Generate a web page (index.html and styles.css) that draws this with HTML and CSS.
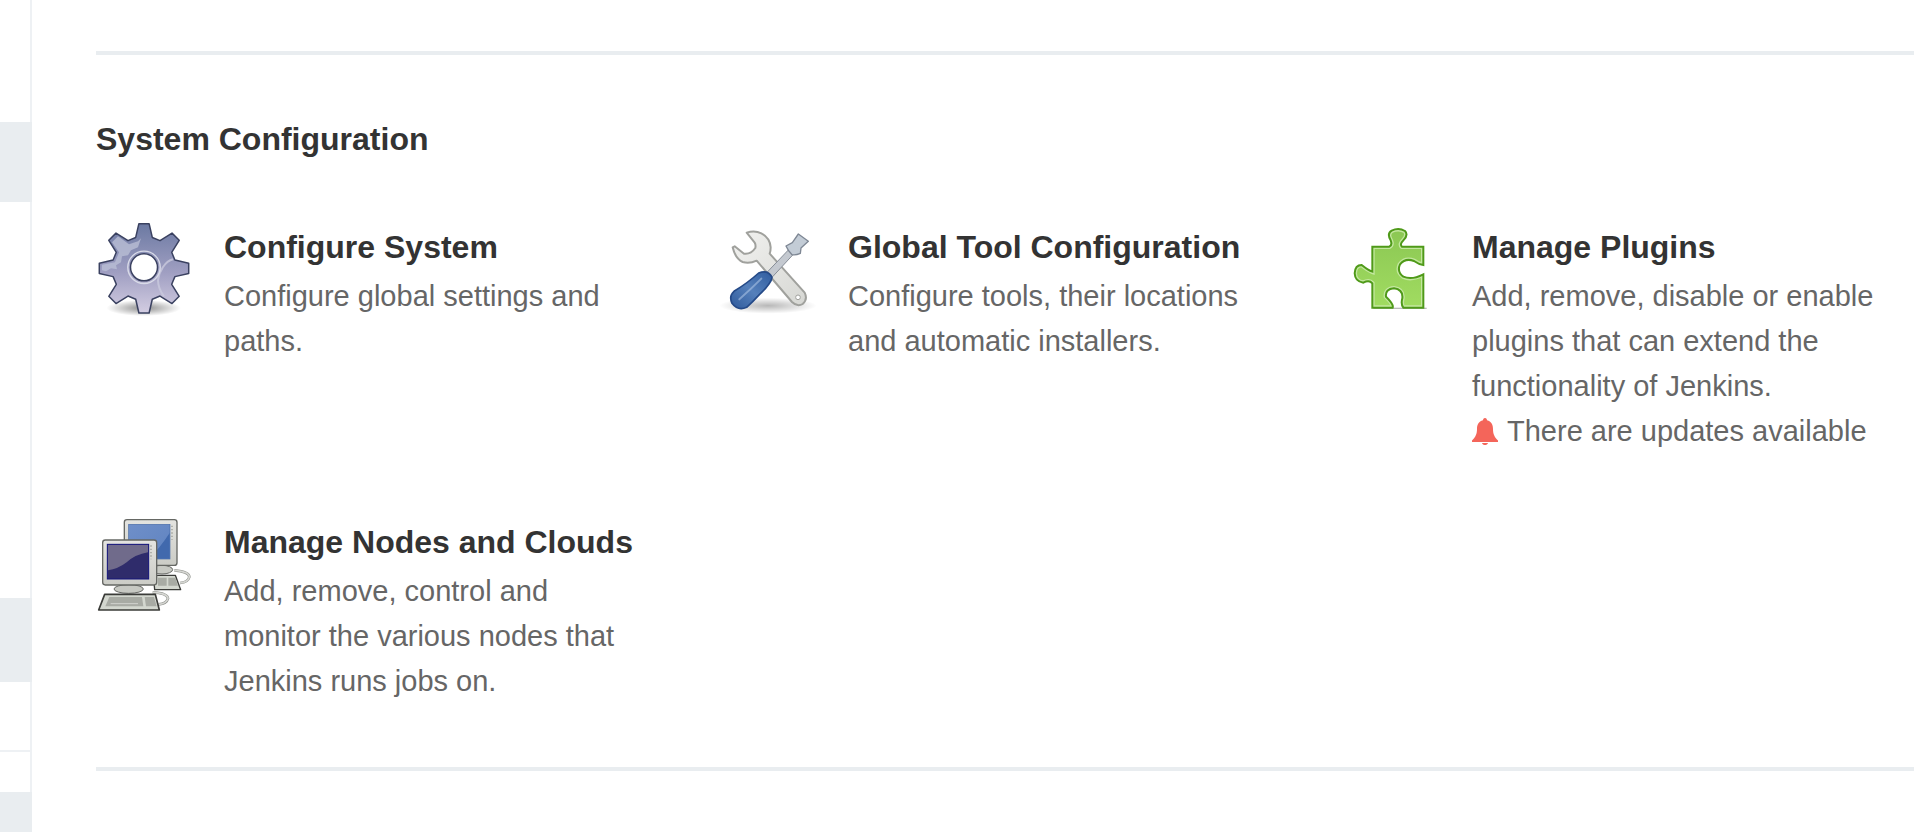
FILE: index.html
```html
<!DOCTYPE html>
<html>
<head>
    <title>Manage Jenkins</title>
    <meta name="viewport" content="width=device-width, initial-scale=1.0">
    <link rel="stylesheet" href="styles.css">
</head>
<body>
    <div id="sidebar">
        <div class="side-item"></div>
        <div class="side-item active"></div>
        <div class="side-item"></div>
        <div class="side-item active"></div>
        <div class="side-item ruled"></div>
        <div class="side-item"></div>
        <div class="side-item active"></div>
    </div>
    <div id="main">
        <hr class="rule">
        <h2 class="section-title">System Configuration</h2>
        <div class="manage-grid">
            <div class="manage-item">
                <svg class="manage-icon" viewBox="0 0 288 288">
                    <defs>
                        <linearGradient id="gear-fill" x1="0" y1="0" x2="0" y2="1">
                            <stop offset="0" stop-color="#6b79a2"/>
                            <stop offset="0.55" stop-color="#a09fc2"/>
                            <stop offset="1" stop-color="#d3cde2"/>
                        </linearGradient>
                        <radialGradient id="gear-shadow">
                            <stop offset="0" stop-color="#000" stop-opacity="0.45"/>
                            <stop offset="1" stop-color="#000" stop-opacity="0"/>
                        </radialGradient>
                    </defs>
                    <ellipse cx="143" cy="258" rx="112" ry="24" fill="url(#gear-shadow)"/>
                    <g transform="translate(144 139) scale(3)">
                        <path fill="url(#gear-fill)" stroke="#3a4160" stroke-width="1.5" stroke-linejoin="round" d="M-8.3 -30.9L-5.1 -44.7L5.100 -44.7L8.3 -30.9L16 -27.7L28 -35.2L35.2 -28L27.7 -16L30.9 -8.3L44.7 -5.1L44.7 5.100L30.9 8.3L27.7 16L35.2 28L28 35.2L16 27.7L8.3 30.9L5.100 44.7L-5.1 44.7L-8.3 30.9L-16 27.7L-28 35.2L-35.2 28L-27.7 16L-30.9 8.3L-44.7 5.100L-44.7 -5.1L-30.9 -8.3L-27.7 -16L-35.2 -28L-28 -35.2L-16 -27.7Z"/>
                        <path fill="#b9bed4" opacity="0.8" d="M-42 -3.500L-29 -6L-25 -16L-32 -26L-26 -32L-15 -24L-6 -27L-3 -30L-6 -21L-13 -18L-16 -13L-22 -12L-23 -6L-28 -3L-27 1L-33 0L-38 3L-42 2Z"/>
                        <path fill="none" stroke="#c9c9dd" stroke-width="2" opacity="0.8" d="M29 -9C21 -7 15 3 14 12C14 18 17 24 20 28"/>
                        <circle cy="-1" r="16.200" fill="none" stroke="#d9dbe8" stroke-width="1.400"/>
                        <circle cy="-1" r="13.500" fill="#fff" stroke="#3a4160" stroke-width="1.500"/>
                    </g>
                </svg>
                <div class="manage-text">
                    <div class="manage-title">Configure System</div>
                    <div class="manage-desc">Configure global settings and paths.</div>
                </div>
            </div>
            <div class="manage-item">
                <svg class="manage-icon" viewBox="0 0 288 288">
                    <defs>
                        <linearGradient id="wrench-fill" x1="0" y1="0" x2="1" y2="1">
                            <stop offset="0" stop-color="#f2f2f0"/>
                            <stop offset="1" stop-color="#d6d7d3"/>
                        </linearGradient>
                        <linearGradient id="handle-fill" x1="1" y1="0" x2="0" y2="1">
                            <stop offset="0" stop-color="#2f5c9f"/>
                            <stop offset="0.5" stop-color="#5580bb"/>
                            <stop offset="1" stop-color="#2f5a9b"/>
                        </linearGradient>
                        <radialGradient id="tool-shadow">
                            <stop offset="0" stop-color="#000" stop-opacity="0.28"/>
                            <stop offset="1" stop-color="#000" stop-opacity="0"/>
                        </radialGradient>
                    </defs>
                    <ellipse cx="144" cy="251" rx="146" ry="24" fill="url(#tool-shadow)"/>
                    <path fill="url(#wrench-fill)" stroke="#a0a19d" stroke-width="6" stroke-linejoin="round" d="M80 32Q104 24 124 34Q150 48 152 76Q152 88 149 95L254 212Q264 232 248 246Q232 256 216 240L110 116Q88 126 68 120Q46 110 38 76L44 73L72 95Q92 98 106 78Q108 68 104 62Z"/>
                    <circle cx="234" cy="226" r="7" fill="#fff" stroke="#a0a19d" stroke-width="3"/>
                    <path fill="#c4c9d0" stroke="#878e98" stroke-width="3" stroke-linejoin="round" d="M205 84L220 97L158 164L142 150Z"/>
                    <path fill="#c3ccd6" stroke="#7e8794" stroke-width="4" stroke-linejoin="round" d="M235 36L265 58L243 78L241 94Q228 100 216 98Q204 86 198 72L217 62Z"/>
                    <path fill="url(#handle-fill)" stroke="#254a88" stroke-width="5" stroke-linejoin="round" d="M116 153Q144 142 156 166Q154 184 118 218Q98 240 80 256Q54 268 36 244Q26 222 42 208Q84 182 116 153Z"/>
                    <path fill="none" stroke="#a9c1e2" stroke-width="6" stroke-linecap="round" opacity="0.6" d="M58 232Q92 202 124 170"/>
                </svg>
                <div class="manage-text">
                    <div class="manage-title">Global Tool Configuration</div>
                    <div class="manage-desc">Configure tools, their locations and automatic installers.</div>
                </div>
            </div>
            <div class="manage-item">
                <svg class="manage-icon" viewBox="12 21 288 288">
                    <defs>
                        <linearGradient id="puzzle-fill" x1="0" y1="0" x2="0" y2="1">
                            <stop offset="0" stop-color="#8bc753"/>
                            <stop offset="1" stop-color="#a1dc61"/>
                        </linearGradient>
                        <clipPath id="puzzle-clip">
                            <path d="M97 95H148Q158 90 152 76Q140 56 155 47Q176 37 195 48Q206 60 190 76Q178 88 186 95H250V150Q236 148 222 138Q196 128 180 148Q170 170 190 185Q215 196 250 178V278H190Q182 268 187 250Q190 224 162 220Q135 222 138 245Q162 268 158 278H97V205Q88 194 70 203Q45 200 44 175Q45 150 65 150Q85 166 97 170Z"/>
                        </clipPath>
                    </defs>
                    <rect x="100" y="278" width="160" height="4" fill="#bbb"/>
                    <path fill="url(#puzzle-fill)" stroke="#c3e79f" stroke-width="14" clip-path="url(#puzzle-clip)" d="M97 95H148Q158 90 152 76Q140 56 155 47Q176 37 195 48Q206 60 190 76Q178 88 186 95H250V150Q236 148 222 138Q196 128 180 148Q170 170 190 185Q215 196 250 178V278H190Q182 268 187 250Q190 224 162 220Q135 222 138 245Q162 268 158 278H97V205Q88 194 70 203Q45 200 44 175Q45 150 65 150Q85 166 97 170Z"/>
                    <path fill="none" stroke="#4f9a19" stroke-width="6" d="M97 95H148Q158 90 152 76Q140 56 155 47Q176 37 195 48Q206 60 190 76Q178 88 186 95H250V150Q236 148 222 138Q196 128 180 148Q170 170 190 185Q215 196 250 178V278H190Q182 268 187 250Q190 224 162 220Q135 222 138 245Q162 268 158 278H97V205Q88 194 70 203Q45 200 44 175Q45 150 65 150Q85 166 97 170Z"/>
                </svg>
                <div class="manage-text">
                    <div class="manage-title">Manage Plugins</div>
                    <div class="manage-desc">Add, remove, disable or enable plugins that can extend the functionality of Jenkins.</div>
                    <div class="manage-desc updates">
                        <svg class="bell" viewBox="0 0 26 27"><path d="M13 0C14.400 0 15 1 15 2.300C19.500 3.300 21 7 21 11C21 16 22.500 19 26 22.500V24H0V22.500C3.500 19 5 16 5 11C5 7 6.500 3.300 11 2.300C11 1 11.600 0 13 0ZM10 25H16C15.500 26.500 14.400 27 13 27C11.600 27 10.500 26.500 10 25Z"/></svg>
                        There are updates available
                    </div>
                </div>
            </div>
            <div class="manage-item">
                <svg class="manage-icon" viewBox="0 0 288 288">
                    <defs>
                        <linearGradient id="case-fill" x1="0" y1="0" x2="0" y2="1">
                            <stop offset="0" stop-color="#e4e4e0"/>
                            <stop offset="1" stop-color="#cbccc6"/>
                        </linearGradient>
                        <linearGradient id="screen-back" x1="0" y1="0" x2="1" y2="1">
                            <stop offset="0" stop-color="#6f8fc9"/>
                            <stop offset="1" stop-color="#5f83c0"/>
                        </linearGradient>
                    </defs>
                    <path fill="none" stroke="#8f918c" stroke-width="8" d="M235 160Q280 164 280 180Q276 196 252 198"/>
                    <path fill="none" stroke="#d5d6d2" stroke-width="5" d="M235 160Q280 164 280 180Q276 196 252 198"/>
                    <ellipse cx="198" cy="158" rx="32" ry="13" fill="#c7c9c3" stroke="#666864" stroke-width="3"/>
                    <path fill="#d3d7cf" stroke="#3b3c39" stroke-width="4" stroke-linejoin="round" d="M172 175H238L254 218H176Z"/>
                    <path fill="#a8aba4" d="M186 182H212V206H186ZM217 182H238L246 206H217Z"/>
                    <rect x="85" y="8" width="158" height="137" rx="8" fill="url(#case-fill)" stroke="#666864" stroke-width="4"/>
                    <rect x="98" y="22" width="124" height="104" fill="url(#screen-back)" stroke="#4a6da8" stroke-width="2"/>
                    <path fill="#4169ad" d="M160 125Q192 92 221 48V125Z"/>
                    <path d="M228 26V68" stroke="#9a9c96" stroke-width="4" stroke-dasharray="4 6"/>
                    <path fill="none" stroke="#8f918c" stroke-width="8" d="M170 226Q214 228 216 244Q212 260 188 262"/>
                    <path fill="none" stroke="#d5d6d2" stroke-width="5" d="M170 226Q214 228 216 244Q212 260 188 262"/>
                    <ellipse cx="98" cy="216" rx="44" ry="13" fill="#c7c9c3" stroke="#666864" stroke-width="3"/>
                    <rect x="20" y="69" width="162" height="135" rx="8" fill="url(#case-fill)" stroke="#666864" stroke-width="4"/>
                    <rect x="34" y="82" width="124" height="104" fill="#2f2c6b" stroke="#14147c" stroke-width="3"/>
                    <path fill="#706b8b" d="M36 84H156V106Q118 112 92 136Q66 156 36 160Z"/>
                    <path d="M165 85V127" stroke="#9a9c96" stroke-width="4" stroke-dasharray="4 6"/>
                    <path fill="#d3d7cf" stroke="#3b3c39" stroke-width="5" stroke-linejoin="round" d="M26 232H178L190 279H8Z"/>
                    <path fill="#a8aba4" d="M40 240H138L142 268H28Z"/>
                    <path fill="#a8aba4" d="M146 240H174L182 268H150Z"/>
                    <path fill="none" stroke="#e8e8e4" stroke-width="2" d="M44 260H126"/>
                </svg>
                <div class="manage-text">
                    <div class="manage-title">Manage Nodes and Clouds</div>
                    <div class="manage-desc">Add, remove, control and monitor the various nodes that Jenkins runs jobs on.</div>
                </div>
            </div>
        </div>
        <hr class="rule bottom">
    </div>
</body>
</html>
```

FILE: styles.css
```css
html, body {
    margin: 0;
    padding: 0;
    height: 832px;
    overflow: hidden;
    background-color: white;
}
body {
    display: flex;
    font-family: "Liberation Sans", Arial, sans-serif;
    color: #333;
}
#sidebar {
    width: 32px;
    flex: none;
    display: grid;
    grid-template-rows: 122px 80px 396px 84px 70px 40px 40px;
}
.side-item {
    box-sizing: border-box;
    border-right: 2px solid #eef1f4;
}
.side-item.active {
    background-color: #e9edf0;
    border-right: none;
}
.side-item.ruled {
    border-bottom: 2px solid #eef1f4;
}
#main {
    flex: 1;
    min-width: 0;
    padding: 51px 0 0 64px;
}
.rule {
    height: 4px;
    margin: 0;
    border: none;
    background-color: #e9edf0;
}
.rule.bottom {
    margin-top: 63.6px;
}
.section-title {
    margin: 65px 0 0;
    font-size: 32px;
    line-height: 38px;
    font-weight: bold;
}
.manage-grid {
    display: grid;
    grid-template-columns: repeat(3, 624px);
    row-gap: 62.8px;
    margin-top: 64px;
}
.manage-item {
    display: flex;
    gap: 32px;
}
.manage-icon {
    width: 96px;
    height: 96px;
    flex: none;
}
.manage-title {
    font-size: 32px;
    line-height: 44px;
    font-weight: bold;
    margin-top: 3px;
}
.manage-desc {
    font-size: 29px;
    line-height: 44.8px;
    color: #666;
    width: 408px;
    margin-top: 5px;
}
.manage-desc.updates {
    margin-top: 1px;
    white-space: nowrap;
    display: flex;
    align-items: center;
    gap: 9px;
}
.bell {
    width: 26px;
    height: 27px;
    fill: #f4655a;
    flex: none;
}
```
